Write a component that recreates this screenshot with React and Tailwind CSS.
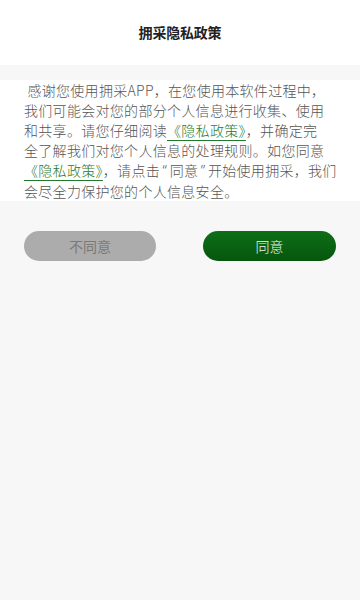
import React from "react";

export default function App() {
  const link = "text-[#1f7a2c] underline decoration-[#1f7a2c] underline-offset-[4px]";
  const q = { fontFamily: '"Noto Sans", sans-serif' };
  return (
    <div
      className="min-h-[600px] w-[360px] bg-[#f7f7f7]"
      style={{ fontFamily: '"Noto Sans CJK SC", "Noto Sans", sans-serif' }}
    >
      <div className="flex h-[65px] items-center justify-center bg-white">
        <h1 className="text-[14px] font-bold text-[#222222] tracking-[-0.2px]">拥采隐私政策</h1>
      </div>
      <div className="mt-[15px] bg-white pl-6 pr-2">
        <p className="text-[14px] font-light leading-[20px] tracking-[0.3px] text-[#555555] whitespace-nowrap">
          {"\u00a0"}感谢您使用拥采APP，在您使用本软件过程中，
          <br />
          我们可能会对您的部分个人信息进行收集、使用
          <br />
          和共享。请您仔细阅读<span className={link}>《隐私政策》</span>，并确定完
          <br />
          全了解我们对您个人信息的处理规则。如您同意
          <br />
          <span className={link}>《隐私政策》</span>，请点击<span className="px-[2.5px]" style={q}>“</span>同意<span className="px-[2.5px]" style={q}>”</span>开始使用拥采，我们
          <br />
          会尽全力保护您的个人信息安全。
        </p>
      </div>
      <div className="mt-[30px] flex justify-between px-6">
        <button className="flex h-[30px] w-[132px] items-center justify-center rounded-full bg-[#acacac] text-[14px] text-[#7a7a7a]">
          不同意
        </button>
        <button className="flex h-[30px] w-[133px] items-center justify-center rounded-full bg-gradient-to-b from-[#0e6f18] to-[#06560d] text-[14px] font-light text-[#eef5ee]">
          同意
        </button>
      </div>
    </div>
  );
}
